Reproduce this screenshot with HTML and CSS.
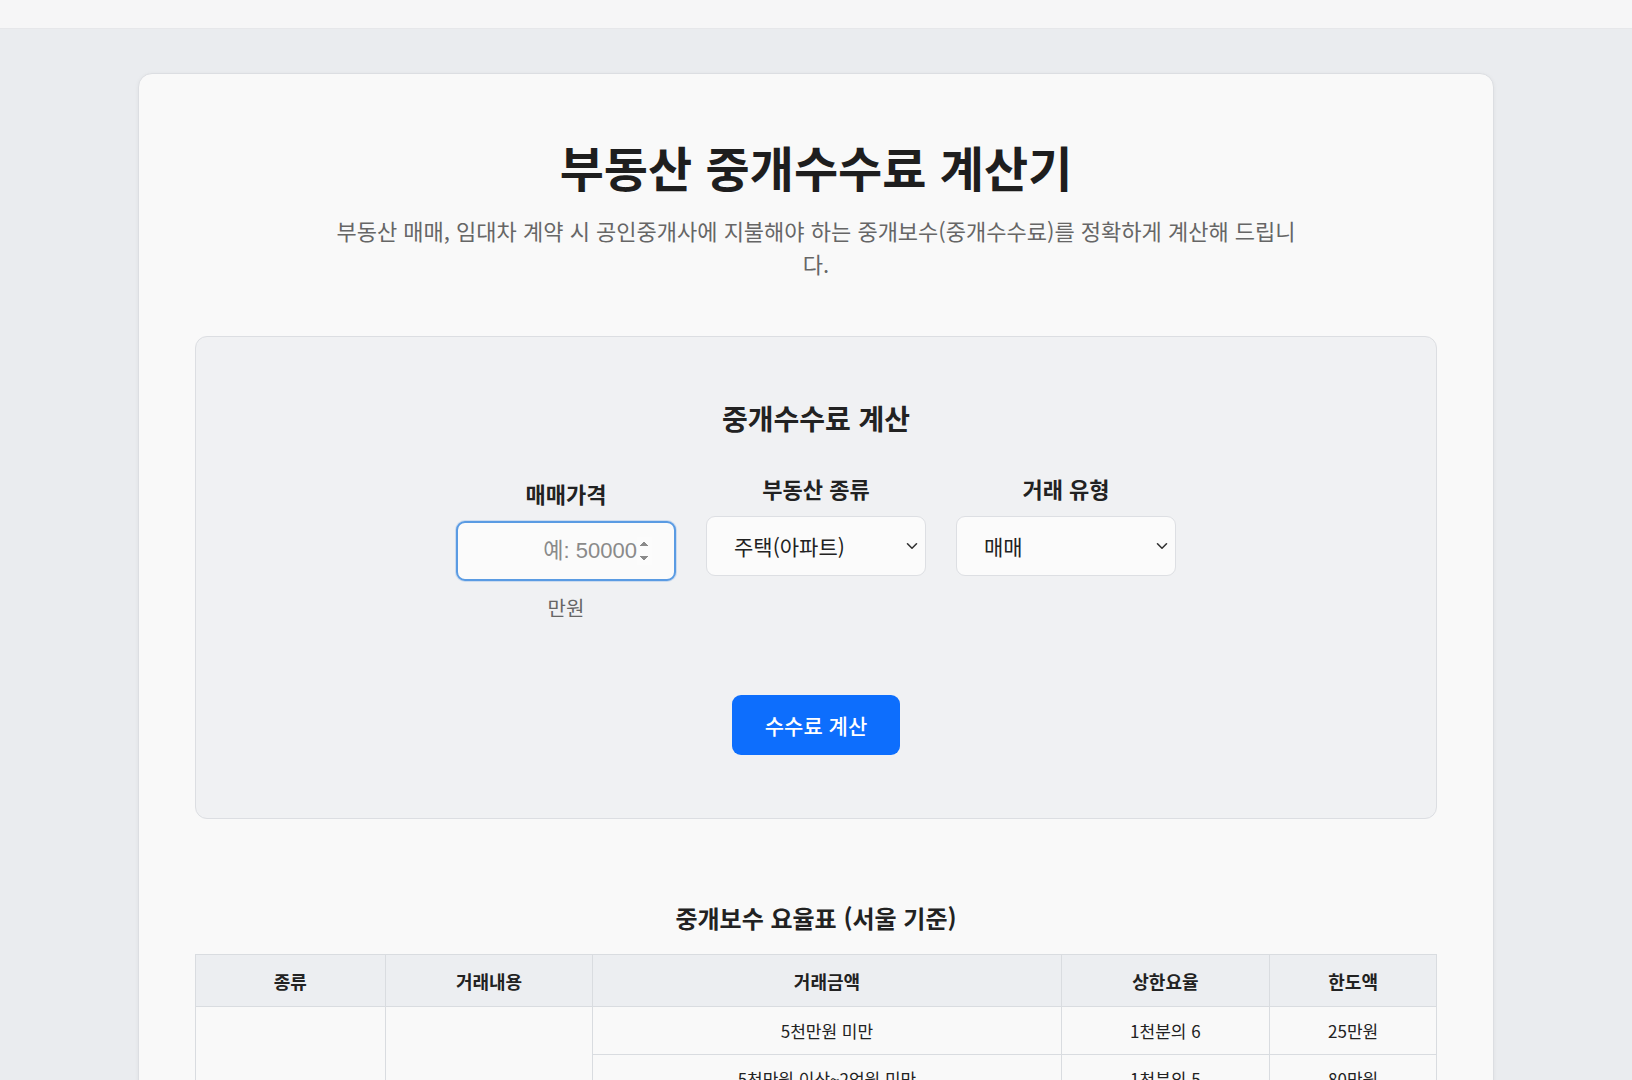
FILE: index.html
```html
<!DOCTYPE html>
<html lang="ko">
<head>
<meta charset="utf-8">
<title>부동산 중개수수료 계산기</title>
<link rel="stylesheet" href="styles.css">
</head>
<body>
<header class="topbar"></header>
<main class="page">
  <section class="card">
    <h1 class="title">부동산 중개수수료 계산기</h1>
    <p class="subtitle">부동산 매매, 임대차 계약 시 공인중개사에 지불해야 하는 중개보수(중개수수료)를 정확하게 계산해 드립니다.</p>

    <div class="calc">
      <h2 class="calc-title">중개수수료 계산</h2>
      <div class="fields">
        <div class="field field-price">
          <label class="field-label" for="price">매매가격</label>
          <input class="price-input" id="price" type="number" placeholder="예: 50000">
          <span class="unit">만원</span>
        </div>
        <div class="field">
          <label class="field-label" for="kind">부동산 종류</label>
          <select class="select" id="kind">
            <option>주택(아파트)</option>
            <option>오피스텔</option>
            <option>토지·상가 등</option>
          </select>
        </div>
        <div class="field">
          <label class="field-label" for="deal">거래 유형</label>
          <select class="select" id="deal">
            <option>매매</option>
            <option>전세</option>
            <option>월세</option>
          </select>
        </div>
      </div>
      <button class="calc-btn" type="button">수수료 계산</button>
    </div>

    <h2 class="table-title">중개보수 요율표 (서울 기준)</h2>
    <table class="rate-table">
      <thead>
        <tr>
          <th class="c1">종류</th>
          <th class="c2">거래내용</th>
          <th class="c3">거래금액</th>
          <th class="c4">상한요율</th>
          <th class="c5">한도액</th>
        </tr>
      </thead>
      <tbody>
        <tr>
          <td rowspan="12">주택</td>
          <td rowspan="6">매매·교환</td>
          <td>5천만원 미만</td>
          <td>1천분의 6</td>
          <td>25만원</td>
        </tr>
        <tr><td>5천만원 이상~2억원 미만</td><td>1천분의 5</td><td>80만원</td></tr>
        <tr><td>2억원 이상~9억원 미만</td><td>1천분의 4</td><td>없음</td></tr>
        <tr><td>9억원 이상~12억원 미만</td><td>1천분의 5</td><td>없음</td></tr>
        <tr><td>12억원 이상~15억원 미만</td><td>1천분의 6</td><td>없음</td></tr>
        <tr><td>15억원 이상</td><td>1천분의 7</td><td>없음</td></tr>
        <tr>
          <td rowspan="6">임대차 등</td>
          <td>5천만원 미만</td><td>1천분의 5</td><td>20만원</td>
        </tr>
        <tr><td>5천만원 이상~1억원 미만</td><td>1천분의 4</td><td>30만원</td></tr>
        <tr><td>1억원 이상~6억원 미만</td><td>1천분의 3</td><td>없음</td></tr>
        <tr><td>6억원 이상~12억원 미만</td><td>1천분의 4</td><td>없음</td></tr>
        <tr><td>12억원 이상~15억원 미만</td><td>1천분의 5</td><td>없음</td></tr>
        <tr><td>15억원 이상</td><td>1천분의 6</td><td>없음</td></tr>
      </tbody>
    </table>
  </section>
</main>
</body>
</html>
```

FILE: styles.css
```css
* { box-sizing: border-box; }

html, body {
  margin: 0;
  padding: 0;
}

body {
  background: #eaecef;
  font-family: "Noto Sans CJK KR", "Noto Sans", sans-serif;
  color: #222;
}

.topbar {
  height: 29px;
  background: #f6f6f7;
  border-bottom: 1px solid #e6e7ea;
}

.page {
  padding: 44px 0 40px;
}

.card {
  width: 1356px;
  margin: 0 auto;
  background: #f9f9f9;
  border: 1px solid #dcdee2;
  border-radius: 14px;
  box-shadow: 0 1px 4px rgba(0, 0, 0, 0.05);
  padding: 63px 56px 60px;
}

.title {
  margin: 0;
  text-align: center;
  font-size: 48px;
  font-weight: 700;
  line-height: 58px;
  color: #1e1e1e;
}

.subtitle {
  margin: 19px auto 0;
  max-width: 968px;
  text-align: center;
  font-size: 22px;
  line-height: 33px;
  color: #666;
}

.calc {
  margin-top: 56px;
  background: #f0f1f3;
  border: 1px solid #dcdee2;
  border-radius: 12px;
  padding: 65px 40px 63px;
  display: flex;
  flex-direction: column;
  align-items: center;
}

.calc-title {
  margin: 0 0 41px;
  font-size: 28px;
  font-weight: 700;
  line-height: 32px;
  color: #222;
}

.fields {
  display: flex;
  justify-content: center;
  align-items: flex-start;
  gap: 30px;
}

.field {
  width: 220px;
  display: flex;
  flex-direction: column;
  align-items: center;
}

.field-price {
  padding-top: 5px;
}

.field-label {
  font-size: 22px;
  font-weight: 700;
  line-height: 26px;
  margin-bottom: 15px;
  color: #222;
}

.price-input {
  width: 100%;
  height: 60px;
  border: 2px solid #5a9be3;
  border-radius: 9px;
  background: #fbfbfb;
  padding: 0 22px 0 14px;
  font-family: "Liberation Sans", "Noto Sans CJK KR", sans-serif;
  font-size: 22px;
  color: #222;
  text-align: right;
  outline: none;
  box-shadow: 0 0 0 1px rgba(90, 155, 227, 0.25);
}

.price-input::placeholder {
  color: #8a8a8a;
}

.price-input::-webkit-inner-spin-button,
.price-input::-webkit-outer-spin-button {
  opacity: 1;
  height: 28px;
}

.unit {
  margin-top: 15px;
  font-size: 20px;
  line-height: 24px;
  color: #666;
}

.select {
  width: 100%;
  height: 60px;
  appearance: none;
  -webkit-appearance: none;
  border: 1px solid #dddfe3;
  border-radius: 9px;
  background-color: #fbfbfb;
  background-image: url("data:image/svg+xml,%3Csvg xmlns='http://www.w3.org/2000/svg' width='12' height='8' viewBox='0 0 12 8'%3E%3Cpath d='M1.5 1.8 6 6.2l4.5-4.4' fill='none' stroke='%23333' stroke-width='1.6' stroke-linecap='round' stroke-linejoin='round'/%3E%3C/svg%3E");
  background-repeat: no-repeat;
  background-position: right 7px center;
  background-size: 12px 8px;
  padding: 0 30px 0 27px;
  font-family: inherit;
  font-size: 21px;
  color: #222;
}

.calc-btn {
  margin-top: 75px;
  width: 168px;
  height: 60px;
  border: none;
  border-radius: 9px;
  background: #0d6efd;
  color: #fff;
  font-family: inherit;
  font-size: 21px;
  font-weight: 500;
  cursor: pointer;
}

.table-title {
  margin: 84px 0 22px;
  text-align: center;
  font-size: 24px;
  font-weight: 600;
  line-height: 29px;
  color: #222;
}

.rate-table {
  width: 100%;
  border-collapse: collapse;
  border: 1px solid #d9dce0;
}

.rate-table th,
.rate-table td {
  border: 1px solid #d9dce0;
  text-align: center;
  vertical-align: middle;
}

.rate-table th {
  height: 52px;
  background: #eceef1;
  font-size: 18px;
  font-weight: 700;
  color: #222;
}

.rate-table td {
  height: 48px;
  font-size: 17px;
  color: #222;
  background: #f9f9f9;
}

.c1 { width: 190px; }
.c2 { width: 208px; }
.c3 { width: 469px; }
.c4 { width: 209px; }
.c5 { width: 167px; }
```
